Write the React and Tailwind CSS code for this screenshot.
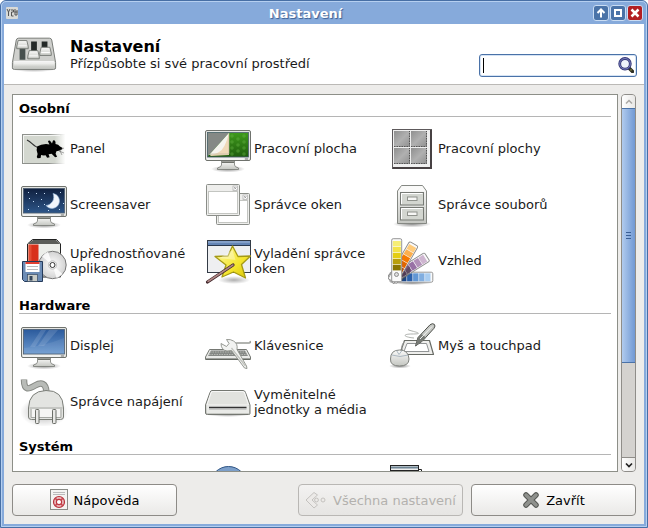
import React, { useRef } from "react";

function Svg({ children, size = "size-12", box = "0 0 48 48" }) {
  return (
    <svg aria-hidden="true" viewBox={box} className={`${size} block shrink-0`}>
      {children}
    </svg>
  );
}

function Defs() {
  return (
    <svg aria-hidden="true" className="absolute size-0">
      <defs>
        <linearGradient id="metal" x1="0" y1="0" x2="0" y2="1">
          <stop offset="0" stopColor="#fbfbfa" />
          <stop offset="1" stopColor="#c4c6c1" />
        </linearGradient>
        <linearGradient id="metalDark" x1="0" y1="0" x2="1" y2="1">
          <stop offset="0" stopColor="#8f8f8f" />
          <stop offset="0.5" stopColor="#b0b0b0" />
          <stop offset="1" stopColor="#909090" />
        </linearGradient>
        <linearGradient id="night" x1="0" y1="0" x2="0" y2="1">
          <stop offset="0" stopColor="#10203f" />
          <stop offset="1" stopColor="#2d5689" />
        </linearGradient>
        <linearGradient id="blueScreen" x1="0" y1="0" x2="0" y2="1">
          <stop offset="0" stopColor="#2b5a9c" />
          <stop offset="1" stopColor="#6c9ad0" />
        </linearGradient>
        <linearGradient id="green" x1="0" y1="0" x2="0" y2="1">
          <stop offset="0" stopColor="#3f9a1d" />
          <stop offset="1" stopColor="#1e5d0c" />
        </linearGradient>
        <linearGradient id="panelFade" x1="0" y1="0" x2="1" y2="0">
          <stop offset="0.75" stopColor="#d3d7cf" />
          <stop offset="1" stopColor="#ffffff" />
        </linearGradient>
        <linearGradient id="panelEdge" x1="0" y1="0" x2="1" y2="0">
          <stop offset="0.6" stopColor="#8e918c" />
          <stop offset="1" stopColor="#ffffff" />
        </linearGradient>
        <linearGradient id="star" x1="0" y1="0" x2="1" y2="1">
          <stop offset="0" stopColor="#fffcb0" />
          <stop offset="0.6" stopColor="#f5e52e" />
          <stop offset="1" stopColor="#d6c300" />
        </linearGradient>
        <radialGradient id="shade">
          <stop offset="0" stopColor="#000" stopOpacity="0.45" />
          <stop offset="1" stopColor="#000" stopOpacity="0" />
        </radialGradient>
        <radialGradient id="disc">
          <stop offset="0" stopColor="#ffffff" />
          <stop offset="1" stopColor="#d2d2d2" />
        </radialGradient>
      </defs>
    </svg>
  );
}

function Monitor({ fill, children }) {
  return (
    <Svg>
      <ellipse cx="24" cy="44" rx="17" ry="3.5" fill="url(#shade)" />
      <path d="M17.500 36h13v4q0 2 4 3v1.500h-21v-1.500q4-1 4-3z" fill="url(#metal)" stroke="#777a75" strokeWidth=".8" />
      <path d="M18 36.500h12v1.500h-12z" fill="#70736d" />
      <rect x="1.500" y="5.500" width="45" height="30" rx="1.500" fill="#e4e5e2" stroke="#6f726d" />
      <rect x="3.500" y="7.500" width="41" height="24.500" fill={fill} stroke="#4b5d70" strokeWidth=".8" />
      {children}
      <path d="M3 34h37" stroke="#fff" />
      <path d="M41 34h3" stroke="#777" />
    </Svg>
  );
}

const PanelIcon = () => (
  <Svg>
    <rect x="2.500" y="9.500" width="43" height="29" fill="url(#panelFade)" stroke="url(#panelEdge)" />
    <path d="M3.500 38V10.500H40" fill="none" stroke="#f4f5f3" />
    <path d="M7 15c4 2 5 4 8 6 2 1 3 2 5 3" fill="none" stroke="#333" strokeWidth="1.200" />
    <path d="M17 21.500q4-2.500 9-2.500l3.500.5-1.500-3q1-2 3 .5l1 1.500 1-3q2-1 2.500 1.500v2q3 .3 4.500 2.500l2.700 1.500-1.500 2q-2.500 1-4.800 1.200l-.8 2.600 1.500 3-2 .5-3.500-3.500-3 .5 1 3-2.500.5-1.500-2.500q-3 .3-4.500-.3l-.5 3-3 .3-.8-1.300.8-3q-1.800-4-.4-7.500z" fill="#000" />
    <path d="M39 26l5 2M40 25l4-2M40 26l2 4" stroke="#555" strokeWidth=".5" />
  </Svg>
);

const ScreensaverIcon = () => (
  <Monitor fill="url(#night)">
    <path d="M33 12.500a7.500 7.500 0 1 1-7 12 8.500 8.500 0 0 0 7-12z" fill="#f1f6fc" stroke="#9dbde0" strokeWidth=".6" />
    {[[8, 11], [13, 20], [8, 28], [18, 25], [24, 12], [28, 29], [40, 11], [43, 22], [16, 12], [21, 18], [39, 28], [24, 23], [9, 17]].map(([x, y], i) => (
      <rect key={i} x={x} y={y} width="1" height="1" fill="#c6def5" />
    ))}
  </Monitor>
);

const DesktopIcon = () => (
  <Monitor fill="url(#green)">
    {[[28, 11], [34, 14], [40, 11], [28, 17], [40, 17], [34, 20], [28, 23], [40, 23], [34, 26], [28, 29], [40, 29]].map(([x, y], i) => (
      <circle key={i} cx={x} cy={y} r="1.800" fill="#69b645" opacity=".4" />
    ))}
    <path d="M4 8h21L4 31z" fill="#858985" />
    <path d="M25 8v22L6 31z" fill="#efd9b8" />
    <path d="M25 8L5 30q7-1 10-3 6-3 10-19z" fill="#f5f4ee" />
    <path d="M25 8v21H6" fill="none" stroke="#b8b29f" strokeWidth=".6" />
  </Monitor>
);

const DisplayIcon = () => (
  <Monitor fill="url(#blueScreen)">
    <path d="M21 8h5L15 25h-5zM29 8h9L24 24h-6z" fill="#fff" opacity=".13" />
    <path d="M4 26q20-2 40-10v15.500H4z" fill="#fff" opacity=".08" />
  </Monitor>
);

const MiniWindow = ({ x, y }) => (
  <g transform={`translate(${x} ${y})`}>
    <rect x=".5" y=".5" width="33" height="31" rx="1" fill="#eeeeec" stroke="#8b8e89" />
    <rect x="2.500" y="7.500" width="29" height="22" fill="#fff" stroke="#c3c5c1" />
    <rect x="27" y="2" width="4.500" height="4.500" fill="#fff" stroke="#aaa" strokeWidth=".7" />
    <path d="M28 3l2.500 2.500M30.500 3L28 5.500" stroke="#888" strokeWidth=".7" />
  </g>
);

const WindowsIcon = () => (
  <Svg>
    <MiniWindow x={12} y={12} />
    <MiniWindow x={2} y={3} />
  </Svg>
);

const WorkspacesIcon = () => (
  <Svg>
    <rect x="4.500" y="4.500" width="39" height="39" fill="#efefef" stroke="#5d595b" />
    <path d="M43 5v38H5" fill="none" stroke="#474143" strokeWidth="2" />
    {[[6, 6], [23, 6], [6, 23], [23, 23]].map(([x, y]) => (
      <g key={`${x}-${y}`}>
        <rect x={x} y={y} width="16" height="16" fill="url(#metalDark)" />
        <path d={`M${x} ${y + 15.5}h15.500V${y}`} fill="none" stroke="#555" strokeDasharray="1.500 1" />
      </g>
    ))}
  </Svg>
);

const CabinetIcon = () => (
  <Svg>
    <ellipse cx="24" cy="43" rx="19" ry="3.500" fill="url(#shade)" />
    <path d="M9.500 10l4-5.500h21l4 5.500v32.500h-29z" fill="url(#metal)" stroke="#858883" />
    <path d="M10.500 10.500l3.500-5h20l3.500 5z" fill="#fafaf9" />
    {[11.5, 26.5].map((y) => (
      <g key={y}>
        <rect x="12.500" y={y} width="23" height="12.500" fill="#d3d6d0" stroke="#777a75" />
        <path d={`M13.500 ${y + 11.5}V${y + 1}h21`} fill="none" stroke="#fff" />
        <rect x="19.500" y={y + 4.5} width="9.500" height="3.500" fill="#f7f7f5" stroke="#8f928c" />
      </g>
    ))}
  </Svg>
);

const PreferredIcon = () => (
  <Svg>
    <path d="M7.500 7l5-4.500h24l4 4.500v33h-33z" fill="#eceeea" stroke="#222" />
    <path d="M8 7l5-4h23l4 4z" fill="#5b5d59" />
    <path d="M8.500 7.500h10V39h-10z" fill="#d8311b" />
    <path d="M8.500 7.500h3V39h-3z" fill="#ee6a4d" opacity=".5" />
    <circle cx="32.500" cy="28" r="13.700" fill="url(#disc)" stroke="#777" />
    <path d="M32.500 28L22 19.500q3-4 6-4.700zM32.500 28l10 9q-3 3-6 4z" fill="#fff" opacity=".8" />
    <circle cx="32.500" cy="28" r="4.200" fill="#eee" stroke="#aaa" strokeWidth=".6" />
    <circle cx="32.500" cy="28" r="2.500" fill="#fff" stroke="#333" />
    <path d="M2.500 24.500h20v20H4.500l-2-2z" fill="#6c8cb5" stroke="#253b5b" />
    <rect x="5.500" y="25" width="14" height="10" fill="#fff" />
    <path d="M5.500 25h14v2h-14z" fill="#e23f31" />
    <path d="M7 29.500h11M7 32.500h11" stroke="#bbb" />
    <rect x="7.500" y="37.500" width="10" height="7" fill="#c9ccc7" stroke="#384b62" strokeWidth=".7" />
    <rect x="9.500" y="39" width="3" height="4.500" fill="#34465d" />
  </Svg>
);

const TweaksIcon = () => (
  <Svg>
    <rect x="3.500" y="3.500" width="43" height="32" fill="#eeeff1" stroke="#333b46" />
    <path d="M4 4h42v4.500H4z" fill="#6485b5" />
    <path d="M4 5h42" stroke="#a4bbdc" />
    <path d="M4 8.500h42" stroke="#29384e" />
    <ellipse cx="30" cy="43" rx="16" ry="4" fill="url(#shade)" opacity=".7" />
    <path d="M28.500 9l5.500 10.500 12.500-.5-9 8.500 4 13.500L29.500 35 18 40l4-12-11-8.500 13-.5z" fill="url(#star)" stroke="#a59a15" strokeWidth="1.300" strokeLinejoin="round" />
    <path d="M28.500 13l3 10-16-2z" fill="#fff" opacity=".35" />
    <path d="M3.500 45L29 28" stroke="#3e2428" strokeWidth="3.200" strokeLinecap="round" />
    <path d="M4 44.500L29 28" stroke="#b08886" strokeWidth="1.500" strokeLinecap="round" />
  </Svg>
);

const Swatches = ({ angle, colors }) => (
  <g transform={`rotate(${angle} 8.500 40)`}>
    <rect x="3.700" y="1.700" width="10" height="43" rx="1.500" fill="#fafafa" stroke="#8b8b8b" strokeWidth=".9" />
    {colors.map((c, i) => (
      <rect key={c} x="4.800" y={4 + i * 6} width="8" height="5.400" fill={c} />
    ))}
  </g>
);

const AppearanceIcon = () => (
  <Svg>
    <ellipse cx="24" cy="46" rx="20" ry="2" fill="url(#shade)" />
    <g transform="translate(-2 0)">
      <Swatches angle={90} colors={["#a9cdf1", "#81aee0", "#6297d4", "#2d62ab", "#1b4587"]} />
      <Swatches angle={58} colors={["#ceb5d0", "#b290b9", "#9871a5", "#75507b", "#5c3566"]} />
      <Swatches angle={30} colors={["#ffcb7b", "#fcaf4e", "#f57900", "#e06500", "#b84a00"]} />
    </g>
    <path d="M14 44l8-8v-7l-8 8z" fill="#444" opacity=".45" />
    <Swatches angle={0} colors={["#f6ee75", "#f3e347", "#e4cd12", "#b99f0b", "#8b7600"]} />
    <circle cx="8.500" cy="37.500" r="2" fill="#ddd" stroke="#777" strokeWidth=".8" />
  </Svg>
);

const KeyboardIcon = () => (
  <Svg>
    <path d="M29 26q-3-5 4-5h12q2 0 1-2" fill="none" stroke="#999c96" strokeWidth="1.500" />
    <path d="M5.500 27.500h37L46.500 35v2.500h-45V35z" fill="#e9eae8" stroke="#757873" />
    <path d="M7 28.500h34l3 5.500H4z" fill="#858885" />
    <path d="M6 30h36M5 32.500h38" stroke="#b4b6b2" strokeDasharray="1.500 1" />
    <path d="M2 37h44" stroke="#555852" />
    <path d="M22.500 17.500l2.500 4-2.500 3-5.500-3q0 6.500 6 7.500l4.500-.5L40.500 46l2.500.5-.5-2.500-9.500-16.500q1-6-3.500-8.500-3-2-7-1.500z" fill="#f2f3f1" stroke="#8b8e88" strokeWidth=".9" />
    <path d="M27.500 26l14 18" stroke="#c0c2bd" strokeWidth="1.300" />
  </Svg>
);

const MouseIcon = () => (
  <Svg>
    <path d="M26 16c-11-1-12-4-2-4 9 0 8-1 0-3q-4-1-4-1.500" fill="none" stroke="#9b9e99" strokeWidth=".8" />
    <path d="M16.500 18.500h25l4 14h-34z" fill="#eeeeec" stroke="#676a64" strokeWidth="1.200" strokeLinejoin="round" />
    <path d="M19 21.500h19.500l2.500 8H16z" fill="#fff" stroke="#85888a" strokeWidth=".9" />
    <path d="M27.500 24l2.500-8.500L42 2.800q2.500-2 4.300-.5 1.500 1.500-.3 4L34.500 19z" fill="#c5c7c3" stroke="#4e514c" strokeWidth="1" />
    <path d="M27.500 24l2.500-8.500 3.500-3.500 4.500 3.500-3.500 3.500z" fill="#777a75" />
    <path d="M32 17L44 4.500" stroke="#f5f5f4" />
    <path d="M15 29q-3-4 1-9" fill="none" stroke="#999" />
    <ellipse cx="12" cy="44" rx="11" ry="2.500" fill="url(#shade)" />
    <path d="M2.500 37q0-9 9-9t9.500 9q0 7-9.500 7t-9-7z" fill="url(#metal)" stroke="#80837e" />
    <path d="M4 33q8 3 16 0M8.500 28.500l2.500 4 3-4" fill="none" stroke="#9cabb8" strokeWidth=".8" />
  </Svg>
);

const PowerIcon = () => (
  <Svg>
    <ellipse cx="24" cy="34" rx="24" ry="15" fill="url(#shade)" opacity=".7" />
    <path d="M4 1.500c0 12 5 9.500 11 6 6-3.500 11-3 11.500 7" fill="none" stroke="#858883" strokeWidth="6.500" />
    <path d="M4 1.500c0 12 5 9.500 11 6 6-3.500 11-3 11.500 7" fill="none" stroke="#b8bbb7" strokeWidth="4.500" />
    <path d="M8.500 30q.5-17 17.500-17.500T43.500 30v9q0 2.500-3 2.500h-29q-3 0-3-2.500z" fill="#e3e4e1" stroke="#7b7e78" />
    <path d="M9.500 30h33M11 31v8.500h30V31" fill="none" stroke="#a6a8a4" />
    <path d="M12 31h28v8H12z" fill="#f5f5f4" />
    {[15.5, 32.5].map((x) => (
      <rect key={x} x={x} y="31.500" width="3.500" height="14" rx=".8" fill="#e8e8e6" stroke="#6b6e68" />
    ))}
  </Svg>
);

const DriveIcon = () => (
  <Svg>
    <ellipse cx="24" cy="36" rx="23" ry="3" fill="url(#shade)" />
    <path d="M8 12.500h31q2 0 2.500 2L46 27v8.500q0 1-1.500 1h-41Q1.500 36.500 1.500 35v-8L6 14.500q.5-2 2-2z" fill="url(#metal)" stroke="#747771" />
    <path d="M8.500 13.500h30.500l1.500 1.500 4 12H3l4-12z" fill="#e1e2de" stroke="#f6f6f5" />
    <path d="M3 28h42v7H3z" fill="#e9eae7" />
    <path d="M5 29.500h37.500" stroke="#333" strokeWidth="1.600" />
    <path d="M5 31h37.500" stroke="#aaa" />
  </Svg>
);

const BlankIcon = () => <Svg />;

const GlobeIcon = () => (
  <Svg>
    <circle cx="24.500" cy="21.500" r="18" fill="#7c9fca" stroke="#2f5585" />
  </Svg>
);

const DocumentIcon = () => (
  <Svg>
    <path d="M30 6.500h3.500v36H30" fill="#fff" stroke="#222" />
    <rect x="2.500" y="2.500" width="28" height="40" fill="#eee" stroke="#222" />
    <path d="M3 4.500h27" stroke="#6d8494" strokeWidth="2" />
    <path d="M3 7.500h27" stroke="#222" />
  </Svg>
);

const Fader = ({ x, y }) => (
  <g>
    <path d={`M${x} ${y}h9l1.500 6v2.500h-12v-2.500z`} fill="url(#metal)" stroke="#71746f" strokeWidth=".9" />
    <path d={`M${x} ${y + 5.5}h9`} stroke="#fff" />
  </g>
);

const MixerIcon = () => (
  <Svg box="-1 -3 50 50">
    <ellipse cx="24" cy="37" rx="24" ry="4" fill="url(#shade)" />
    <path d="M8 5.500h32q2 0 2.500 2L46.500 31v5.500q0 1.500-2 1.500h-41q-2 0-2-1.500V31L5.500 7.500q.5-2 2.500-2z" fill="#cfd0cd" stroke="#747773" />
    <path d="M3 30.500h42.500V36H3z" fill="url(#metal)" />
    <path d="M3 30h42" stroke="#fff" />
    <path d="M9 10h6v18H9z" fill="#47504e" />
    <path d="M21 9h6v12h-6zM32 9h6v9h-6z" fill="#242928" />
    <Fader x={7.5} y={8} />
    <Fader x={19} y={18.5} />
    <Fader x={31.5} y={15} />
  </Svg>
);

const sections = [
  {
    title: "Osobní",
    items: [
      ["Panel", PanelIcon],
      ["Pracovní plocha", DesktopIcon],
      ["Pracovní plochy", WorkspacesIcon],
      ["Screensaver", ScreensaverIcon],
      ["Správce oken", WindowsIcon],
      ["Správce souborů", CabinetIcon],
      ["Upřednostňované aplikace", PreferredIcon],
      ["Vyladění správce oken", TweaksIcon],
      ["Vzhled", AppearanceIcon],
    ],
  },
  {
    title: "Hardware",
    items: [
      ["Displej", DisplayIcon],
      ["Klávesnice", KeyboardIcon],
      ["Myš a touchpad", MouseIcon],
      ["Správce napájení", PowerIcon],
      ["Vyměnitelné jednotky a média", DriveIcon],
    ],
  },
  {
    title: "Systém",
    items: [
      ["", BlankIcon],
      ["", GlobeIcon],
      ["", DocumentIcon],
    ],
  },
];

function Item({ label, Icon }) {
  const body = (
    <>
      <Icon />
      <span className="flex-1 pb-px">{label}</span>
    </>
  );
  const cls = "flex h-14 w-[184px] items-center gap-0.5 pr-4 text-left";
  return label ? (
    <button type="button" className={cls}>{body}</button>
  ) : (
    <div className={cls}>{body}</div>
  );
}

function Section({ title, items }) {
  return (
    <section className="pb-2">
      <h2 className="mb-1 h-[17px] border-b border-[#b5b5b5] text-[13px] leading-[18px] font-bold text-black">{title}</h2>
      <div className="flex flex-wrap pl-px">
        {items.map(([label, Icon], i) => (
          <Item key={i} label={label} Icon={Icon} />
        ))}
      </div>
    </section>
  );
}

function TitleButton({ label, red, children }) {
  return (
    <button
      type="button"
      aria-label={label}
      className={`flex size-4 items-center justify-center rounded-[3px] border border-[#c9dcf3] ${red ? "bg-[#b21e22]" : "bg-[#4a73a8]"}`}
    >
      <svg aria-hidden="true" viewBox="0 0 14 14" className="size-3.5 shrink-0" fill="none" stroke="#fff" strokeWidth="2">
        {children}
      </svg>
    </button>
  );
}

function ActionButton({ children, disabled }) {
  return (
    <button
      type="button"
      disabled={disabled}
      className={`flex h-8 w-[165px] items-center justify-center gap-1.5 rounded border text-[13px] ${
        disabled
          ? "border-[#b9b7b4] bg-linear-to-b from-[#f3f2f1] to-[#e6e5e3] text-[#b3b1ae]"
          : "border-[#8d8b87] bg-linear-to-b from-white to-[#eae9e7] text-black"
      }`}
    >
      {children}
    </button>
  );
}

export default function App() {
  const list = useRef(null);
  const scroll = (top) => list.current?.scrollBy({ top });

  return (
    <div className="flex h-screen flex-col rounded-t-md border border-[#476fa5] bg-[#86aadb] font-['DejaVu_Sans',sans-serif] text-[13px] leading-[15px] text-[#1a1a1a]">
      <Defs />
      <div className="flex min-h-0 flex-1 flex-col rounded-t-[5px] border border-[#b5cff0] px-0.5 pb-0.5">
        <header className="flex h-[22px] shrink-0 items-center pr-px">
          <svg aria-hidden="true" viewBox="0 0 12 12" className="ml-0.5 size-3 shrink-0">
            <rect width="12" height="12" rx="1" fill="#d9dad7" />
            <path d="M1 2l1.500 3v4M4 2L2.500 5M5 3h2.500v2H5.500v4h2M9 2v6h2V3M8.500 5h3" fill="none" stroke="#555" strokeWidth="1" />
          </svg>
          <h1 className="flex-1 text-center text-[13px] font-bold text-white [text-shadow:1px_1px_1px_#3c5f92]">Nastavení</h1>
          <div className="flex gap-px">
            <TitleButton label="Sbalit">
              <path d="M7 11.500V4M3.500 7L7 3.500 10.500 7" />
            </TitleButton>
            <TitleButton label="Maximalizovat">
              <rect x="4" y="4" width="6" height="6" />
            </TitleButton>
            <TitleButton label="Zavřít okno" red>
              <path d="M3.500 3.500l7 7M10.500 3.500l-7 7" strokeWidth="2.500" />
            </TitleButton>
          </div>
        </header>

        <main className="flex min-h-0 flex-1 flex-col bg-[#edecea]">
          <div className="flex h-[61px] shrink-0 items-center border-b border-[#bbb9b6] bg-white pr-[7px] pl-1.5">
            <MixerIcon />
            <div className="ml-3 flex-1">
              <h2 className="text-base leading-[18px] font-bold text-black">Nastavení</h2>
              <p>Přízpůsobte si své pracovní prostředí</p>
            </div>
            <div className="relative mt-[22px]">
              <input
                type="search"
                aria-label="Hledat"
                className="block h-[23px] w-[158px] rounded-[3px] border border-[#4a72a8] bg-white pr-6 pl-1.5 shadow-[inset_0_0_0_1px_#d5e3f4] outline-none"
              />
              <span className="absolute top-1 left-1 h-[15px] w-px bg-black" />
              <svg aria-hidden="true" viewBox="0 0 16 16" className="absolute top-[3px] right-[3px] size-4">
                <path d="M11 11l3.500 3.500" stroke="#2e3026" strokeWidth="3.500" strokeLinecap="round" />
                <path d="M12.500 12.500l1 1" stroke="#8c8a3e" strokeWidth="1.500" />
                <circle cx="7" cy="6.800" r="5.300" fill="#eef3fb" stroke="#343777" strokeWidth="2.800" />
                <circle cx="7" cy="6.800" r="5.300" fill="none" stroke="#7a80bd" strokeWidth="1" />
              </svg>
            </div>
          </div>

          <div className="flex min-h-0 flex-1 gap-[3px] px-2 pt-[9px] pb-3">
            <div ref={list} className="min-w-0 flex-1 overflow-auto border border-[#8d8f88] bg-white px-1.5 pt-[5px] [scrollbar-width:none]">
              {sections.map((s) => (
                <Section key={s.title} {...s} />
              ))}
            </div>
            <div className="flex w-[15px] shrink-0 flex-col overflow-hidden rounded border border-[#8f8d89] bg-[#d4d2cf]">
              <button type="button" aria-label="Posunout nahoru" onClick={() => scroll(-56)} className="flex h-[13px] shrink-0 items-center justify-center bg-linear-to-r from-white to-[#e9e8e6]">
                <svg aria-hidden="true" viewBox="0 0 8 6" className="h-1.5 w-2" fill="none" stroke="#aaa8a5" strokeWidth="1.500"><path d="M1 4.500l3-3 3 3" /></svg>
              </button>
              <div className="min-h-0 flex-1">
                <div className="flex h-[73%] flex-col items-center justify-center gap-0.5 border-y border-[#4a72a8] bg-linear-to-r from-[#b1cbee] to-[#7199d4]">
                  <span className="h-px w-[5px] bg-[#3a5f96]" />
                  <span className="h-px w-[5px] bg-[#3a5f96]" />
                  <span className="h-px w-[5px] bg-[#3a5f96]" />
                </div>
              </div>
              <button type="button" aria-label="Posunout dolů" onClick={() => scroll(56)} className="flex h-3.5 shrink-0 items-center justify-center border-t border-[#8f8d89] bg-linear-to-r from-white to-[#e9e8e6]">
                <svg aria-hidden="true" viewBox="0 0 8 6" className="h-1.5 w-2" fill="none" stroke="#222" strokeWidth="1.700"><path d="M1 1.500l3 3 3-3" /></svg>
              </button>
            </div>
          </div>

          <footer className="flex shrink-0 gap-2 px-2 pb-2">
            <ActionButton>
              <svg aria-hidden="true" viewBox="0 0 18 22" className="h-[22px] w-[18px]">
                <rect x=".5" y=".5" width="17" height="20" fill="#f4f4f2" stroke="#8a8c87" />
                <path d="M3 3.500h12M3 5.500h12" stroke="#bbb" />
                <circle cx="9" cy="13" r="4.200" fill="none" stroke="#e8b9bb" strokeWidth="3" />
                <circle cx="9" cy="13" r="5.500" fill="none" stroke="#b9343d" strokeWidth="1.200" />
                <circle cx="9" cy="13" r="2.600" fill="#fff" stroke="#b9343d" strokeWidth="1.100" />
                <path d="M5.200 9.200l2 2M12.800 9.200l-2 2M5.200 16.800l2-2M12.800 16.800l-2-2" stroke="#c9414b" strokeWidth="1.600" />
              </svg>
              Nápověda
            </ActionButton>
            <div className="flex-1" />
            <ActionButton disabled>
              <svg aria-hidden="true" viewBox="0 0 22 18" className="h-[18px] w-[22px]" fill="#eceae8" stroke="#c4c2bf">
                <path d="M9 1.500l3.500 2.500L7 9l5.500 5L9 17 1 9z" />
                <circle cx="11.500" cy="9" r="1.900" />
                <circle cx="18" cy="9" r="2" />
              </svg>
              Všechna nastavení
            </ActionButton>
            <ActionButton>
              <svg aria-hidden="true" viewBox="0 0 18 18" className="size-[18px]" strokeLinecap="round">
                <path d="M4 4l10 10M14 4L4 14" stroke="#555753" strokeWidth="5.500" />
                <path d="M4 4l10 10M14 4L4 14" stroke="#8f918d" strokeWidth="3.500" />
              </svg>
              Zavřít
            </ActionButton>
          </footer>
        </main>
      </div>
    </div>
  );
}
